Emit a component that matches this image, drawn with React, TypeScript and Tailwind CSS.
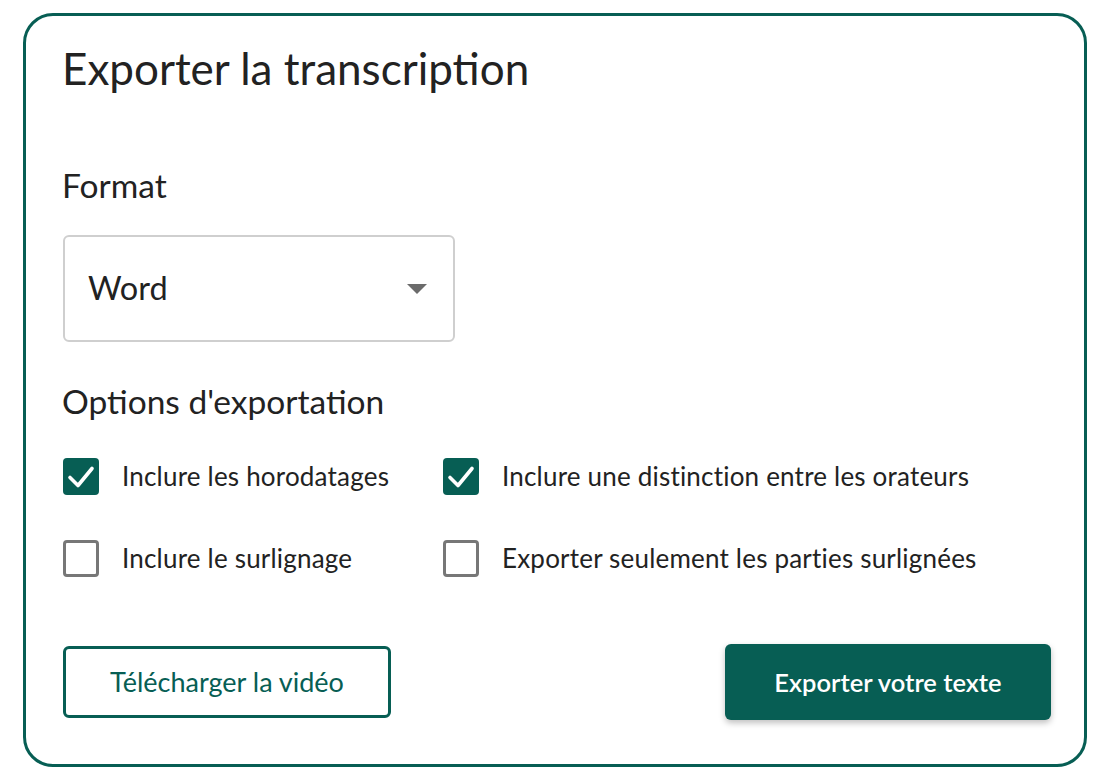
import React from "react";

const Check = () => (
  <svg viewBox="0 0 36 36" className="w-[36px] h-[36px]" fill="none" stroke="white" strokeWidth="3.6" strokeLinecap="round" strokeLinejoin="round">
    <path d="M7 19.5L15 27.5L29 10.5" />
  </svg>
);

function Box({ checked, label }: { checked: boolean; label: string }) {
  return (
    <div className="flex items-center gap-[23px] h-[40px]">
      {checked ? (
        <div className="w-[36px] h-[37px] rounded-[4px] bg-[#075e54] flex items-center justify-center">
          <Check />
        </div>
      ) : (
        <div className="w-[36px] h-[37px] rounded-[4px] border-[3px] border-[#777] bg-white" />
      )}
      <span className="text-[26px] tracking-[0.2px] text-[#222]">{label}</span>
    </div>
  );
}

export default function App() {
  return (
    <div className="w-[1110px] h-[780px] bg-white pt-[13px] pl-[23px]" style={{ fontFamily: "Lato, 'Open Sans', sans-serif" }}>
      <div className="w-[1064px] h-[754px] border-[3px] border-[#075e54] rounded-[30px] pl-[36px] pr-[33px] pt-[24px] flex flex-col">
        <h1 className="text-[44px] leading-[56px] text-[#222]">Exporter la transcription</h1>
        <h2 className="mt-[69px] text-[33.5px] leading-[40px] text-[#222]">Format</h2>
        <div className="mt-[30px] ml-[1px] w-[392px] h-[107px] border-2 border-[#cfcfcf] rounded-[6px] flex items-center justify-between pl-[23px] pr-[26px]">
          <span className="text-[32.5px] text-[#222]">Word</span>
          <svg width="20" height="10" viewBox="0 0 20 10"><path d="M0 0h20L10 10z" fill="#6b6b6b" /></svg>
        </div>
        <h2 className="mt-[39px] text-[33.5px] leading-[40px] text-[#222]">Options d'exportation</h2>
        <div className="mt-[35px] ml-[1px] grid grid-cols-[380px_1fr] gap-y-[42px]">
          <Box checked label="Inclure les horodatages" />
          <Box checked label="Inclure une distinction entre les orateurs" />
          <Box checked={false} label="Inclure le surlignage" />
          <Box checked={false} label="Exporter seulement les parties surlignées" />
        </div>
        <div className="mt-[66px] ml-[1px] flex justify-between items-center">
          <button className="w-[328px] h-[72px] border-[3px] border-[#075e54] rounded-[6px] text-[#075e54] text-[27px]">
            Télécharger la vidéo
          </button>
          <button className="w-[326px] h-[76px] bg-[#075e54] rounded-[6px] text-white text-[25.5px] font-semibold shadow-[0_3px_6px_rgba(0,0,0,0.25)]">
            Exporter votre texte
          </button>
        </div>
      </div>
    </div>
  );
}
